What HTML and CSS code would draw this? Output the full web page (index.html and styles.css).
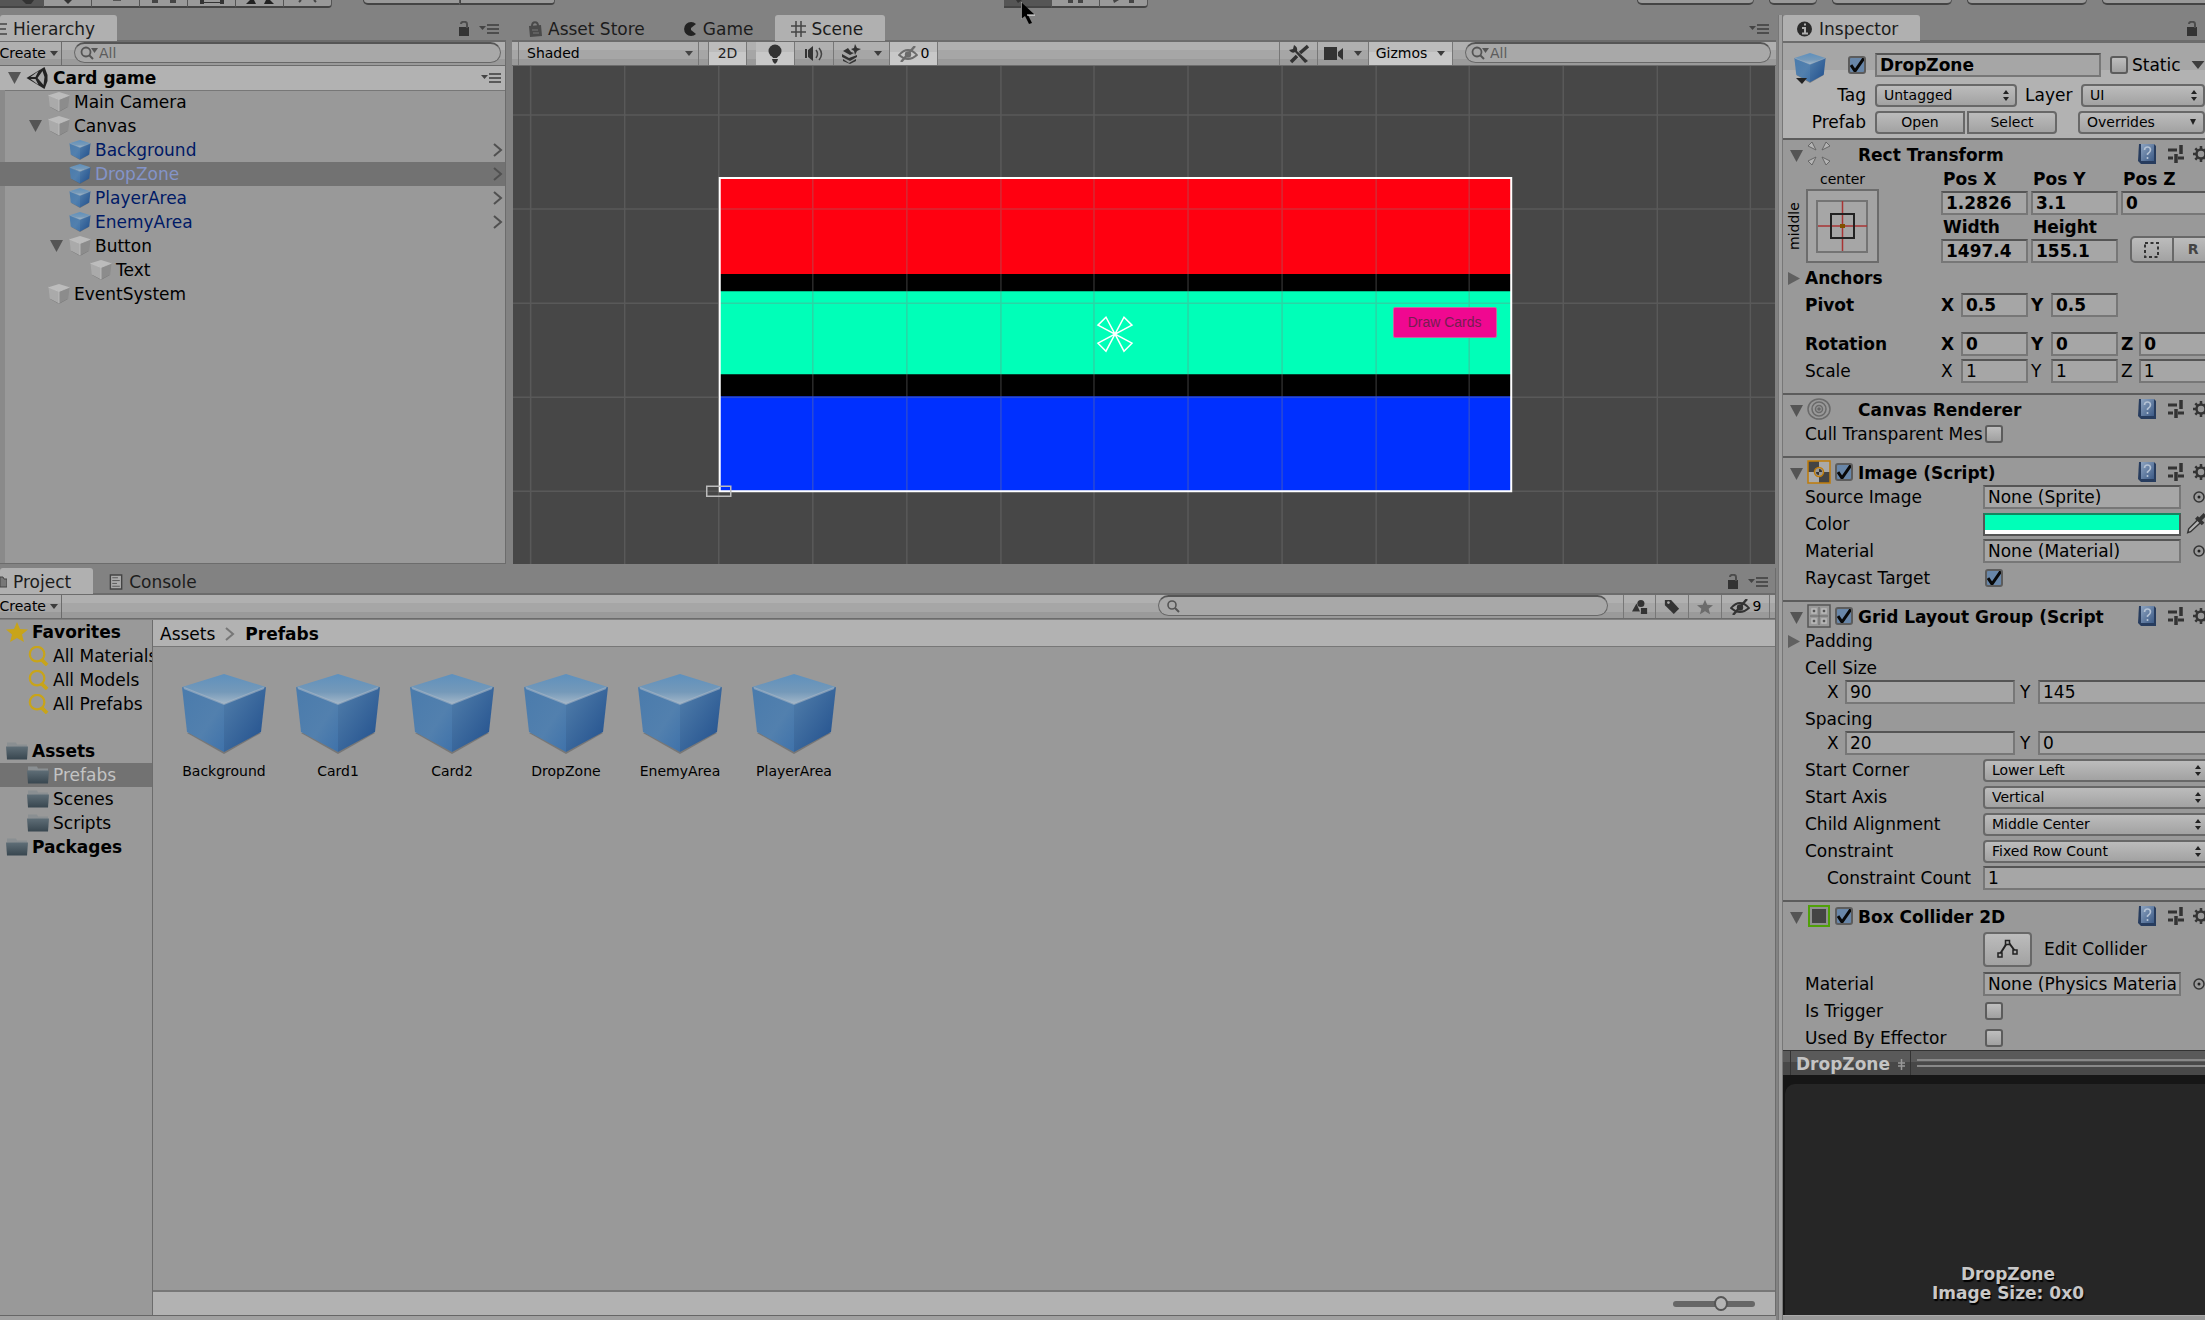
FILE: index.html
```html
<!DOCTYPE html>
<html lang="en">
<head>
<meta charset="utf-8">
<title>Card game - Editor</title>
<link rel="stylesheet" href="styles.css">
</head>
<body>
<svg class="sprite" aria-hidden="true">
  <defs>
    <linearGradient id="bl" x1="0" y1="0" x2="1" y2="1"><stop offset="0" stop-color="#4a7bac"/><stop offset=".6" stop-color="#5280ae"/><stop offset="1" stop-color="#3f72aa"/></linearGradient>
    <linearGradient id="br" x1="0" y1="0" x2="1" y2="1"><stop offset="0" stop-color="#527fab"/><stop offset="1" stop-color="#204e8c"/></linearGradient>
    <linearGradient id="bt" x1="0" y1="0" x2="0" y2="1"><stop offset="0" stop-color="#5e90bd"/><stop offset=".6" stop-color="#7599b9"/><stop offset="1" stop-color="#a3b7c9"/></linearGradient>
    <linearGradient id="fo" x1="0" y1="0" x2="0" y2="1"><stop offset="0" stop-color="#5f6e77"/><stop offset="1" stop-color="#38464f"/></linearGradient>
    <linearGradient id="bk" x1="0" y1="0" x2="1" y2="1"><stop offset="0" stop-color="#8ea4c0"/><stop offset="1" stop-color="#3c5a86"/></linearGradient>
  </defs>
  <symbol id="cube" viewBox="0 0 86 80"><path d="M6 59L43 80l37-21z" fill="#555" opacity=".5"/><path d="M43 0l42 13-42 17L1 13z" fill="url(#bt)"/><path d="M1 13l42 17v48L6 58z" fill="url(#bl)"/><path d="M85 13L43 30v48l37-20z" fill="url(#br)"/><path d="M3 14l40 16 40-16" fill="none" stroke="#a6b8c8" stroke-width="2" opacity=".6"/></symbol>
  <symbol id="gray" viewBox="0 0 86 80"><path d="M6 59L43 80l37-21z" fill="#555" opacity=".5"/><path d="M43 0l42 13-42 17L1 13z" fill="#bcbcbc"/><path d="M1 13l42 17v48L6 58z" fill="#aaa"/><path d="M85 13L43 30v48l37-20z" fill="#8c8c8c"/><path d="M1 13l42 17 42-17M43 30v48" fill="none" stroke="#c4c4c4" stroke-width="3"/></symbol>
  <symbol id="down" viewBox="0 0 13 12"><path d="M0 0h13L6.500 12z" fill="#555"/></symbol>
  <symbol id="right" viewBox="0 0 12 13"><path d="M0 0v13l12-6.500z" fill="#606060"/></symbol>
  <symbol id="chev" viewBox="0 0 10 14"><path d="M1 1l7 6-7 6" fill="none" stroke="#505050" stroke-width="2"/></symbol>
  <symbol id="caret" viewBox="0 0 8 5"><path d="M0 0h8L4 5z" fill="#3c3c3c"/></symbol>
  <symbol id="lock" viewBox="0 0 12 15"><path d="M1 6h10v9H1z" fill="#333"/><path d="M3 3c0-3 6-3 6 0v4" fill="none" stroke="#4c4c4c" stroke-width="2"/></symbol>
  <symbol id="menu" viewBox="0 0 20 10"><path d="M0 2h7L3.500 6z" fill="#444"/><path d="M8 1h12M8 5h12M8 9h12" stroke="#3c3c3c" stroke-width="1.500"/></symbol>
  <symbol id="find" viewBox="0 0 18 14"><circle cx="6" cy="6" r="4.500" fill="none" stroke="#555" stroke-width="1.800"/><path d="M9 9l4 4" stroke="#555" stroke-width="2"/><path d="M11 2h7l-3.500 5z" fill="#555"/></symbol>
  <symbol id="glass" viewBox="0 0 14 14"><circle cx="6" cy="6" r="4" fill="none" stroke="#555" stroke-width="1.600"/><path d="M9 9l4 4" stroke="#555" stroke-width="2"/></symbol>
  <symbol id="gold" viewBox="0 0 22 22"><circle cx="10" cy="9" r="8" fill="none" stroke="#c8a41a" stroke-width="2.500"/><path d="M15 15l6 6" stroke="#c8a41a" stroke-width="4"/></symbol>
  <symbol id="star" viewBox="0 0 22 20"><path d="M11 0l3 7 8 .5-6 5 2 7.500-7-4-7 4 2-7.500-6-5L8 7z"/></symbol>
  <symbol id="folder" viewBox="0 0 22 19"><path d="M1 5V1h9l1 2h10v3z" fill="#8a8f92"/><path d="M0 5h22l-1 13H1z" fill="url(#fo)"/></symbol>
  <symbol id="book" viewBox="0 0 18 21"><path d="M1 1h15l2 2v18H3L0 18z" fill="#273c5e"/><path d="M3 1h13v17H3z" fill="url(#bk)"/><path d="M6.500 7q0-3 3-3t3 3q0 2-3 4v1M9.500 14v2" fill="none" stroke="#b4c2d4" stroke-width="1.600"/></symbol>
  <symbol id="preset" viewBox="0 0 16 18"><path d="M0 5h9M10 13h6M0 13h5" stroke="#333" stroke-width="3"/><path d="M13 0v9M8 9v9" stroke="#333" stroke-width="3.500"/></symbol>
  <symbol id="gear" viewBox="0 0 16 16"><circle cx="8" cy="8" r="4.500" fill="none" stroke="#333" stroke-width="2.500"/><path d="M8 0v3M8 13v3M0 8h3M13 8h3M2.300 2.300l2 2M11.700 11.700l2 2M2.300 13.700l2-2M11.700 4.300l2-2" stroke="#333" stroke-width="2.500"/></symbol>
  <symbol id="pick" viewBox="0 0 12 12"><circle cx="6" cy="6" r="5" fill="none" stroke="#333" stroke-width="1.500"/><circle cx="6" cy="6" r="1.500" fill="#222"/></symbol>
  <symbol id="eye" viewBox="0 0 20 16"><path d="M1 9q9-10 18 0-9 8-18 0z" fill="none" stroke="currentColor" stroke-width="1.800"/><circle cx="10" cy="8.500" r="3.200" fill="currentColor"/><path d="M3 16L17 0" stroke="currentColor" stroke-width="2.400"/></symbol>
</svg>

<div class="editor">
  <header class="topbar">
    <div class="tools">
      <button class="tool on" aria-label="Hand"><svg viewBox="0 0 44 6"><path d="M22 0h12l-3 4h-5z" fill="#333"/></svg></button>
      <button class="tool" aria-label="Move"><svg viewBox="0 0 44 6"><path d="M18 0h8l-4 4z" fill="#333"/></svg></button>
      <button class="tool" aria-label="Rotate"><svg viewBox="0 0 44 6"><path d="M19 0h8v1h-8z" fill="#555"/></svg></button>
      <button class="tool" aria-label="Scale"><svg viewBox="0 0 44 6"><path d="M10 0h6v3h-6zM28 0h6v3h-6z" fill="#444"/></svg></button>
      <button class="tool" aria-label="Rect"><svg viewBox="0 0 44 6"><path d="M10 0h4v2h16V0h4v4h-4V3H14v1h-4z" fill="#333"/></svg></button>
      <button class="tool" aria-label="Transform"><svg viewBox="0 0 44 6"><path d="M8 4l4-4h4l2 4zM36 4l-4-4h-4l-2 4z" fill="#222"/></svg></button>
      <button class="tool" aria-label="Custom"><svg viewBox="0 0 44 6"><path d="M13 2l2-2M28 0l2 2" stroke="#444" stroke-width="2"/></svg></button>
    </div>
    <div class="tools pivots"><button class="tool short wide" aria-label="Pivot"></button><button class="tool short" aria-label="Local"></button></div>
    <div class="space-a"></div>
    <div class="tools play">
      <button class="tool on" aria-label="Play"><svg viewBox="0 0 44 6"><path d="M10 0h6l-4 3z" fill="#333"/></svg></button>
      <button class="tool" aria-label="Pause"><svg viewBox="0 0 44 6"><path d="M14 0h5v3h-5zM24 0h5v3h-5z" fill="#444"/></svg></button>
      <button class="tool" aria-label="Step"><svg viewBox="0 0 44 6"><path d="M11 0h6l-5 3zM27 0h5v3h-5z" fill="#444"/></svg></button>
    </div>
    <div class="space-b"></div>
    <div class="account"><button class="tool short menu-w" aria-label="Collab"></button><button class="tool short cloud" aria-label="Cloud"></button><button class="tool short menu-w" aria-label="Account"></button><button class="tool short menu-w" aria-label="Layers"></button><button class="tool short menu-w" aria-label="Layout"></button></div>
    <svg class="cursor" viewBox="0 0 14 22"><path d="M0 0v17l4-3 4 8 3-1-4-8h7z" fill="#000"/><path d="M0 0v17M6 13h8" stroke="#fff"/></svg>
  </header>

  <div class="work">
    <div class="docks">
      <section class="hierarchy">
        <div class="tabs">
          <div class="tab active cut"><svg class="ic7" viewBox="0 0 7 12"><path d="M0 1h7M0 6h6M0 11h7" stroke="#444" stroke-width="1.500"/></svg>Hierarchy</div>
          <div class="tabtools"><svg class="lock"><use href="#lock"/></svg><svg class="menu"><use href="#menu"/></svg></div>
        </div>
        <div class="bar">
          <button class="create">Create <svg class="caret"><use href="#caret"/></svg></button>
          <label class="search hsearch"><svg class="find"><use href="#find"/></svg><input type="text" placeholder="All" aria-label="Search hierarchy"></label>
        </div>
        <div class="scene-row"><svg class="tri"><use href="#down"/></svg><svg class="logo" viewBox="0 0 21 22"><path d="M0 11L18 0l3 8v6l-3 8z" fill="#222"/><path d="M4 10l8-6-3 6zM4 12h5l3 6zM16 4l2 6-1 8-6-7z" fill="#a8a8a8"/></svg><b>Card game</b><svg class="menu end"><use href="#menu"/></svg></div>
        <ul class="tree">
          <li class="d1"><svg class="cube"><use href="#gray"/></svg>Main Camera</li>
          <li class="d1 open"><svg class="tri"><use href="#down"/></svg><svg class="cube"><use href="#gray"/></svg>Canvas</li>
          <li class="d2 pre"><svg class="cube"><use href="#cube"/></svg>Background<svg class="chev"><use href="#chev"/></svg></li>
          <li class="d2 pre sel"><svg class="cube"><use href="#cube"/></svg>DropZone<svg class="chev"><use href="#chev"/></svg></li>
          <li class="d2 pre"><svg class="cube"><use href="#cube"/></svg>PlayerArea<svg class="chev"><use href="#chev"/></svg></li>
          <li class="d2 pre"><svg class="cube"><use href="#cube"/></svg>EnemyArea<svg class="chev"><use href="#chev"/></svg></li>
          <li class="d2 open"><svg class="tri"><use href="#down"/></svg><svg class="cube"><use href="#gray"/></svg>Button</li>
          <li class="d3"><svg class="cube"><use href="#gray"/></svg>Text</li>
          <li class="d1"><svg class="cube"><use href="#gray"/></svg>EventSystem</li>
        </ul>
      </section>

      <section class="scene">
        <div class="tabs">
          <div class="tab"><svg class="ic15" viewBox="0 0 15 16"><path d="M1 5l12-1 1 11-12 1z" fill="#4a4a4a"/><path d="M4 5c0-5 6-5 6 0" fill="none" stroke="#4a4a4a" stroke-width="2"/><path d="M4 9h6M5 12h6" stroke="#777"/></svg>Asset Store</div>
          <div class="tab"><svg class="ic15" viewBox="0 0 15 16"><path d="M13 3L8 7v2l5 4a7 7 0 1 1 0-10z" fill="#222"/></svg>Game</div>
          <div class="tab active"><svg class="ic15" viewBox="0 0 15 16"><path d="M0 5h15M0 11h15M5 0v16M10 0v16" stroke="#444" stroke-width="1.500"/></svg>Scene</div>
          <div class="tabtools"><svg class="menu"><use href="#menu"/></svg></div>
        </div>
        <div class="bar">
          <select class="shaded" aria-label="Draw mode"><option>Shaded</option></select>
          <button class="tb lit two">2D</button>
          <button class="tb lit" aria-label="Lighting"><svg class="ic20" viewBox="0 0 20 20"><circle cx="10" cy="7" r="6.500" fill="#333"/><path d="M6 10h8l-2 4H8zM7 15h6l-1 3-2 2-2-2z" fill="#333"/></svg></button>
          <button class="tb" aria-label="Audio"><svg class="ic20" viewBox="0 0 20 20"><path d="M1 5h2v9H1zM4 6l5-4v15l-5-4z" fill="#333"/><path d="M12 6q3 4 0 8M15 4q5 6 0 12" fill="none" stroke="#444" stroke-width="1.500"/></svg></button>
          <button class="tb fx" aria-label="Effects"><svg class="ic20" viewBox="0 0 20 20"><path d="M1 10l7 4 8-3v2l-7 4-8-4zM2 15l6 4 7-4v2l-6 3-7-3zM2 7l5-3 3 4 3 1-4 2z" fill="#333"/><path d="M14 0l2 4 4 1-4 2-2 4-1-4-3-2 3-1z" fill="#333"/></svg><svg class="caret"><use href="#caret"/></svg></button>
          <button class="tb lit vis"><svg class="eye dim"><use href="#eye"/></svg>0</button>
          <span class="grow"></span>
          <button class="tb" aria-label="Tools"><svg class="ic20" viewBox="0 0 20 20"><path d="M5 1l-1 4-4 1q3 4 6 2l10 11 3-2L8 7q1-4-3-6z" fill="#333"/><path d="M19 2l-8 7M8 12l-6 6" stroke="#333" stroke-width="3.500"/></svg></button>
          <button class="tb cam" aria-label="Camera"><svg class="ic20" viewBox="0 0 20 20"><path d="M0 3h13v13H0zM14 8l5-4v12l-5-4z" fill="#333"/></svg><svg class="caret"><use href="#caret"/></svg></button>
          <button class="tb lit giz">Gizmos <svg class="caret"><use href="#caret"/></svg></button>
          <label class="search ssearch"><svg class="find"><use href="#find"/></svg><input type="text" placeholder="All" aria-label="Search scene"></label>
        </div>
        <div class="view">
          <svg class="world" viewBox="0 0 1262 498" preserveAspectRatio="xMidYMid slice">
            <path d="M207 112h791v313H207z" fill="#000"/>
            <path d="M207 112h791v96H207z" fill="#ff0010"/>
            <path d="M207 225h791v83H207z" fill="#00ffb8"/>
            <path d="M207 330h791v95H207z" fill="#0030ff"/>
            <path d="M18 0v498M112 0v498M206 0v498M300 0v498M394 0v498M488 0v498M581 0v498M675 0v498M769 0v498M863 0v498M956 0v498M1050 0v498M1144 0v498M1237 0v498M0 49h1262M0 143h1262M0 237h1262M0 331h1262M0 425h1262" stroke="#808080" stroke-opacity=".33" stroke-width="1.500"/>
            <path d="M207 112h791v313H207z" fill="none" stroke="#fff" stroke-width="2"/>
            <path d="M194 420h24v10h-24z" fill="none" stroke="#bbb" stroke-width="1.500"/>
            <path d="M602 268l-9-17-8 8zM602 268l9-17 8 8zM602 268l-9 17-8-8zM602 268l9 17 8-8z" fill="none" stroke="#fff" stroke-width="1.500"/>
          </svg>
          <button class="draw">Draw Cards</button>
        </div>
      </section>

      <section class="project">
        <div class="tabs">
          <div class="tab active cut"><svg class="ic7" viewBox="0 0 7 12"><path d="M0 1h3l1 2h3v8H0z" fill="#777" stroke="#444"/></svg>Project</div>
          <div class="tab"><svg class="ic15" viewBox="0 0 15 17"><path d="M1 1h12v15H1z" fill="#aaa" stroke="#444" stroke-width="1.500"/><path d="M3 4h6M3 7h8M3 10h5M3 13h8" stroke="#555"/></svg>Console</div>
          <div class="tabtools"><svg class="lock"><use href="#lock"/></svg><svg class="menu"><use href="#menu"/></svg></div>
        </div>
        <div class="bar">
          <button class="create">Create <svg class="caret"><use href="#caret"/></svg></button>
          <span class="grow"></span>
          <label class="search psearch"><svg class="find"><use href="#glass"/></svg><input type="text" aria-label="Search project"></label>
          <button class="tb sm" aria-label="By type"><svg class="ic18" viewBox="0 0 18 18"><circle cx="10" cy="5" r="4" fill="#333"/><path d="M0 14l5-9 4 9zM10 10h7v7h-7z" fill="#333"/></svg></button>
          <button class="tb sm" aria-label="By label"><svg class="ic18" viewBox="0 0 18 18"><path d="M1 1h7l9 10-6 6L1 7z" fill="#333"/><circle cx="5" cy="4" r="1.500" fill="#aaa"/></svg></button>
          <button class="tb sm" aria-label="Favorite"><svg class="ic18 dimstar"><use href="#star"/></svg></button>
          <button class="tb nine"><svg class="eye"><use href="#eye"/></svg>9</button>
        </div>
        <div class="browser">
          <ul class="folders">
            <li class="f0"><svg class="fic gold"><use href="#star"/></svg><b>Favorites</b></li>
            <li class="f1"><svg class="fic"><use href="#gold"/></svg>All Materials</li>
            <li class="f1"><svg class="fic"><use href="#gold"/></svg>All Models</li>
            <li class="f1"><svg class="fic"><use href="#gold"/></svg>All Prefabs</li>
            <li class="f0 group"><svg class="fic"><use href="#folder"/></svg><b>Assets</b></li>
            <li class="f1 sel"><svg class="fic"><use href="#folder"/></svg>Prefabs</li>
            <li class="f1"><svg class="fic"><use href="#folder"/></svg>Scenes</li>
            <li class="f1"><svg class="fic"><use href="#folder"/></svg>Scripts</li>
            <li class="f0"><svg class="fic"><use href="#folder"/></svg><b>Packages</b></li>
          </ul>
          <div class="content">
            <nav class="crumbs"><a href="#assets">Assets</a><svg class="chev"><use href="#chev"/></svg><b>Prefabs</b></nav>
            <div class="assets">
              <figure><svg><use href="#cube"/></svg><figcaption>Background</figcaption></figure>
              <figure><svg><use href="#cube"/></svg><figcaption>Card1</figcaption></figure>
              <figure><svg><use href="#cube"/></svg><figcaption>Card2</figcaption></figure>
              <figure><svg><use href="#cube"/></svg><figcaption>DropZone</figcaption></figure>
              <figure><svg><use href="#cube"/></svg><figcaption>EnemyArea</figcaption></figure>
              <figure><svg><use href="#cube"/></svg><figcaption>PlayerArea</figcaption></figure>
            </div>
            <div class="status"><input type="range" min="0" max="100" value="60" aria-label="Icon size"></div>
          </div>
        </div>
      </section>
    </div>

    <aside class="inspector">
      <div class="tabs">
        <div class="tab active"><svg class="ic15" viewBox="0 0 15 16"><circle cx="7.500" cy="8" r="7.500" fill="#2a2a2a"/><path d="M5 7h3v5M5 12.500h6M7 3.500h2" fill="none" stroke="#b0b0b0" stroke-width="2"/></svg>Inspector</div>
        <div class="tabtools"><svg class="lock"><use href="#lock"/></svg></div>
      </div>
      <div class="object">
        <svg class="objcube" viewBox="0 0 32 32"><use href="#cube" width="32" height="30"/><path d="M2 25h11l-5 6z" fill="#222"/></svg>
        <div class="orows">
          <div class="orow">
            <input type="checkbox" id="active" checked aria-label="Active"><input class="name" type="text" value="DropZone" aria-label="Name"><input type="checkbox" id="static"><label for="static">Static</label><svg class="big"><use href="#caret"/></svg>
          </div>
          <div class="orow"><label class="ol" for="tag">Tag</label><select id="tag" class="pop tag"><option>Untagged</option></select><label class="ll" for="layer">Layer</label><select id="layer" class="pop layer"><option>UI</option></select></div>
          <div class="orow"><span class="ol">Prefab</span><span class="pair"><button class="btn">Open</button><button class="btn">Select</button></span><select class="pop over" aria-label="Overrides"><option>Overrides</option></select></div>
        </div>
      </div>

      <div class="comp">
        <div class="title"><svg class="tri"><use href="#down"/></svg><svg class="ci" viewBox="0 0 24 24"><path d="M1 4l4-4 4 8zM23 4l-4-4-4 8zM1 19l4 4 4-8zM23 19l-4 4-4-8z" fill="#b4b4b4" stroke="#666"/></svg><span class="slot"></span><h2>Rect Transform</h2><svg class="bk"><use href="#book"/></svg><svg class="ps"><use href="#preset"/></svg><svg class="gr"><use href="#gear"/></svg></div>
        <div class="rect">
          <div class="anchor"><span class="ac">center</span><span class="am">middle</span>
            <svg class="abox" viewBox="0 0 73 74"><path d="M1 1h71v72H1z" fill="#a4a4a4" stroke="#6c6c6c" stroke-width="2"/><path d="M11 12h50v51H11z" fill="#a6a6a6" stroke="#747474" stroke-width="2"/><path d="M12 37h49M36.500 12v50" stroke="#a83434" stroke-width="1.500"/><path d="M25 25h23v24H25z" fill="none" stroke="#222" stroke-width="2"/><path d="M34 35h5v4h-5z" fill="#805000"/></svg></div>
          <label for="px">Pos X</label><label for="py">Pos Y</label><label for="pz">Pos Z</label>
          <input type="text" id="px" value="1.2826"><input type="text" id="py" value="3.1"><input type="text" id="pz" value="0" class="bleed">
          <label for="w">Width</label><label for="h">Height</label><span></span>
          <input type="text" id="w" value="1497.4"><input type="text" id="h" value="155.1">
          <span class="modes"><button class="btn" aria-label="Blueprint"><svg class="ic15" viewBox="0 0 15 16"><path d="M1 1h13v14H1z" fill="none" stroke="#333" stroke-width="2" stroke-dasharray="3 2.500"/></svg></button><button class="btn raw">R</button></span>
        </div>
        <div class="row fold"><svg class="tr"><use href="#right"/></svg><b>Anchors</b></div>
        <div class="row vec bold"><span>Pivot</span><label>X<input type="text" value="0.5"></label><label>Y<input type="text" value="0.5"></label></div>
        <div class="row vec bold apart"><span>Rotation</span><label>X<input type="text" value="0"></label><label>Y<input type="text" value="0"></label><label class="bleed">Z<input type="text" value="0"></label></div>
        <div class="row vec"><span>Scale</span><label>X<input type="text" value="1"></label><label>Y<input type="text" value="1"></label><label class="bleed">Z<input type="text" value="1"></label></div>
      </div>

      <div class="comp">
        <div class="title"><svg class="tri"><use href="#down"/></svg><svg class="ci" viewBox="0 0 24 24"><g fill="none" stroke="#6a6a6a" stroke-width="1.500"><ellipse cx="12" cy="12" rx="11" ry="10"/><circle cx="12" cy="12" r="7"/><circle cx="12" cy="12" r="3.500"/></g><circle cx="12" cy="12" r="1.800" fill="#666"/></svg><span class="slot"></span><h2>Canvas Renderer</h2><svg class="bk"><use href="#book"/></svg><svg class="ps"><use href="#preset"/></svg><svg class="gr"><use href="#gear"/></svg></div>
        <div class="row"><label for="cull">Cull Transparent Mes</label><input type="checkbox" id="cull"></div>
      </div>

      <div class="comp">
        <div class="title"><svg class="tri"><use href="#down"/></svg><svg class="ci" viewBox="0 0 24 24"><path d="M1 1h22v22H1z" fill="#aaa"/><path d="M1 1h11v11H1zM12 12h11v11H12z" fill="#444"/><path d="M1 1h22v22H1z" fill="none" stroke="#c07c08" stroke-width="1.500"/><circle cx="12" cy="12" r="4.500" fill="#999" stroke="#c07c08" stroke-width="1.500"/><path d="M12 9v3H9a3 3 0 0 0 3 3v-3h3a3 3 0 0 0-3-3" fill="#333"/></svg><input type="checkbox" checked aria-label="Enable Image"><h2>Image (Script)</h2><svg class="bk"><use href="#book"/></svg><svg class="ps"><use href="#preset"/></svg><svg class="gr"><use href="#gear"/></svg></div>
        <div class="row"><label for="src">Source Image</label><input type="text" id="src" value="None (Sprite)"><svg class="pick"><use href="#pick"/></svg></div>
        <div class="row"><span>Color</span><button class="color" aria-label="Color"></button><svg class="drop" viewBox="0 0 24 24"><path d="M6 21l1-4L17 7l3 3L9 20z" fill="#b4b4b4" stroke="#333" stroke-width="1.500"/><path d="M15 5l7 7M18 8l6-6" stroke="#333" stroke-width="4"/></svg></div>
        <div class="row"><label for="mat">Material</label><input type="text" id="mat" value="None (Material)"><svg class="pick"><use href="#pick"/></svg></div>
        <div class="row"><label for="ray">Raycast Target</label><input type="checkbox" id="ray" checked></div>
      </div>

      <div class="comp">
        <div class="title"><svg class="tri"><use href="#down"/></svg><svg class="ci" viewBox="0 0 24 24"><path d="M1 1h22v22H1z" fill="#999" stroke="#555" stroke-width="1.500"/><path d="M5 5h4v4H5zM15 5h4v4h-4zM5 15h4v4H5zM15 15h4v4h-4z" fill="#555" stroke="#bbb" stroke-width="1.500"/><path d="M12 3v18M3 12h18" stroke="#666"/></svg><input type="checkbox" checked aria-label="Enable Grid Layout Group"><h2>Grid Layout Group (Script</h2><svg class="bk"><use href="#book"/></svg><svg class="ps"><use href="#preset"/></svg><svg class="gr"><use href="#gear"/></svg></div>
        <div class="row fold"><svg class="tr"><use href="#right"/></svg>Padding</div>
        <div class="row">Cell Size</div>
        <div class="row xy"><label for="cx">X</label><input type="text" id="cx" value="90"><label for="cy">Y</label><input type="text" id="cy" class="bleed" value="145"></div>
        <div class="row">Spacing</div>
        <div class="row xy"><label for="sx">X</label><input type="text" id="sx" value="20"><label for="sy">Y</label><input type="text" id="sy" class="bleed" value="0"></div>
        <div class="row"><label for="corner">Start Corner</label><select id="corner" class="pop bleed"><option>Lower Left</option></select></div>
        <div class="row"><label for="axis">Start Axis</label><select id="axis" class="pop bleed"><option>Vertical</option></select></div>
        <div class="row"><label for="align">Child Alignment</label><select id="align" class="pop bleed"><option>Middle Center</option></select></div>
        <div class="row"><label for="cons">Constraint</label><select id="cons" class="pop bleed"><option>Fixed Row Count</option></select></div>
        <div class="row"><label for="count" class="indent">Constraint Count</label><input type="text" id="count" class="bleed" value="1"></div>
      </div>

      <div class="comp last">
        <div class="title"><svg class="tri"><use href="#down"/></svg><svg class="ci" viewBox="0 0 24 24"><path d="M2 2h20v20H2z" fill="#444" stroke="#50a008" stroke-width="2"/><path d="M4 4h16v16H4z" fill="none" stroke="#909090" stroke-width="2"/></svg><input type="checkbox" checked aria-label="Enable Box Collider 2D"><h2>Box Collider 2D</h2><svg class="bk"><use href="#book"/></svg><svg class="ps"><use href="#preset"/></svg><svg class="gr"><use href="#gear"/></svg></div>
        <div class="row edit"><span></span><button class="btn editbtn" id="edit" aria-label="Edit Collider"><svg viewBox="0 0 22 20"><path d="M3 15l7-11h2l6 8" fill="none" stroke="#222" stroke-width="2"/><path d="M1 14h4v4H1zM8.500 1.500h4v4h-4zM16 11h4v4h-4z" fill="#aaa" stroke="#222" stroke-width="1.500"/></svg></button><label for="edit">Edit Collider</label></div>
        <div class="row"><label for="pm">Material</label><input type="text" id="pm" value="None (Physics Materia"><svg class="pick"><use href="#pick"/></svg></div>
        <div class="row"><label for="trig">Is Trigger</label><input type="checkbox" id="trig"></div>
        <div class="row"><label for="eff">Used By Effector</label><input type="checkbox" id="eff"></div>
      </div>

      <div class="preview">
        <div class="pbar"><button class="pname">DropZone <svg viewBox="0 0 7 11"><path d="M0 4h7M0 7h7M3.500 0v11" stroke="#999" stroke-width="1.500"/></svg></button><span class="grip"></span></div>
        <div class="pview"><b>DropZone<br>Image Size: 0x0</b></div>
      </div>
    </aside>
  </div>
</div>
</body>
</html>
```
FILE: styles.css
```css
* { box-sizing: border-box; }
body { margin: 0; background: #828282; color: #000; font: 17px/24px "DejaVu Sans", Verdana, sans-serif; }
button, input, select { font: inherit; color: inherit; margin: 0; border-radius: 0; appearance: none; outline: 0; }
ul { list-style: none; margin: 0; padding: 0; }
svg { display: block; flex: none; }
.sprite { position: absolute; width: 0; height: 0; }
.grow { flex: 1; }

.editor { display: flex; flex-direction: column; height: 100vh; overflow: hidden; }
.work { flex: 1; min-height: 0; display: grid; grid-template-columns: minmax(0, 1fr) 423px; gap: 6px; }
.docks { min-height: 0; display: grid; grid-template-columns: 506px minmax(0, 1fr); grid-template-rows: 551fr 749fr; gap: 4px 6px; margin-bottom: 4px; box-shadow: 0 4px #a0a0a0; border-bottom: 1px solid #666; }

/* top toolbar */
.topbar { position: relative; display: flex; align-items: flex-start; height: 15px; flex: none; }
.tools { display: flex; }
.tool { width: 48px; height: 8px; padding: 0; border: 0; border-right: 1px solid #555; border-bottom: 2px solid #444; background: #999; overflow: hidden; }
.tool svg { height: 6px; margin: auto; }
.tool.on { background: #555; }
.tools .tool:last-child { border-bottom-right-radius: 4px; }
.tools:first-child .tool:first-child { width: 44px; }
.short { height: 5px; border-left: 1px solid #444; border-radius: 0 0 5px 5px; }
.pivots { margin-left: 31px; }
.pivots .tool { width: 95px; border-radius: 0 0 5px 0; }
.pivots .wide { width: 97px; border-radius: 0 0 0 5px; }
.space-a { flex: 451; }
.space-b { flex: 491; }
.account { display: flex; gap: 15px; }
.menu-w { width: 120px; }
.account .menu-w:first-child { width: 117px; }
.account .menu-w:last-child { width: 103px; border-right: 0; border-radius: 0 0 0 5px; }
.cursor { position: absolute; left: 1021px; top: 2px; width: 14px; height: 22px; z-index: 2; }

/* tabs */
.tabs { display: flex; height: 27px; flex: none; border-bottom: 2px solid #6c6c6c; color: #1c1c1c; }
.tab { display: flex; align-items: center; gap: 5px; padding: 2px 22px 0 16px; height: 26px; line-height: 22px; }
.tab.active { background: #b0b0b0; border-radius: 3px 3px 0 0; }
.tab.cut { padding-left: 0; gap: 6px; }
.tabtools { margin-left: auto; display: flex; align-items: center; gap: 9px; padding: 2px 7px 0 0; }
.ic7 { width: 7px; height: 12px; }
.ic15 { width: 15px; height: 16px; }
.ic18 { width: 16px; height: 16px; }
.ic20 { width: 20px; height: 20px; }
.lock { width: 12px; height: 15px; }
.menu { width: 20px; height: 10px; }
.caret { width: 8px; height: 5px; }

/* panel toolbars */
.bar { display: flex; height: 24px; flex: none; border-bottom: 1px solid #6c6c6c; background: linear-gradient(#b0b0b0 35%, #a6a6a6 35%, #a6a6a6 75%, #9a9a9a 75%); font-size: 14px; line-height: 23px; }
.create { display: flex; align-items: center; gap: 4px; width: 62px; padding: 0 3px 0 0; border: 0; border-right: 1px solid #6c6c6c; background: none; justify-content: flex-end; white-space: nowrap; }
.search { display: flex; align-items: center; height: 21px; border: 1px solid #686868; border-top: 2px solid #555; border-radius: 11px; background: #a8a8a8; padding-left: 5px; }
.search input { flex: 1; min-width: 0; padding: 0 1px; border: 0; background: none; height: 18px; font-size: 14px; }
.search input::placeholder { color: #5c5c5c; opacity: 1; }
.find { width: 18px; height: 14px; }
.hsearch { flex: 1; margin: 0 4px 0 12px; }
.ssearch { width: 306px; margin: 0 5px 0 12px; }
.psearch { width: 450px; margin-right: 15px; }
.tb { display: flex; align-items: center; justify-content: center; gap: 6px; width: 39px; padding: 0; border: 0; border-right: 1px solid #777; background: none; }
.lit { background: linear-gradient(#bcbcbc 45%, #c8c8c8 45%); }
.two { margin: 0 9px; color: #222; border-left: 1px solid #777; }
.fx { width: 56px; gap: 13px; }
.vis { width: 48px; gap: 3px; }
.cam { width: 51px; gap: 10px; border-left: 0; }
.grow + .tb { border-left: 1px solid #777; }
.giz { width: 84px; gap: 10px; }
.sm { width: 33px; }
.psearch + .sm { border-left: 1px solid #777; }
.nine { width: 48px; gap: 3px; margin-right: 5px; }
.eye { width: 20px; height: 16px; color: #333; }
.dim { color: #6c6c6c; }
.dimstar { fill: #6c6c6c; }
.shaded { width: 181px; margin-left: 6px; padding: 0 8px; border: 0; border-left: 1px solid #777; border-right: 1px solid #777; background: url("data:image/svg+xml,%3Csvg xmlns='http://www.w3.org/2000/svg' width='8' height='5'%3E%3Cpath d='M0 0h8L4 5z' fill='%23444'/%3E%3C/svg%3E") no-repeat right 5px top 9px; }

/* hierarchy */
.hierarchy { display: flex; flex-direction: column; min-height: 0; background: #999; border-right: 1px solid #6c6c6c; border-bottom: 1px solid #6c6c6c; }
.hierarchy .tabs, .scene .tabs, .project .tabs, .inspector > .tabs { background: #828282; }
.hierarchy .tabs { margin-right: -1px; }
.scene-row { display: flex; align-items: center; height: 25px; margin-bottom: -1px; background: #b2b2b2; border-bottom: 1px solid #777; padding: 0 4px 0 8px; gap: 5px; }
.tri { width: 13px; height: 12px; }
.logo { width: 22px; height: 22px; }
.end { margin-left: auto; }
.tree { flex: 1; border-left: 5px solid #8a8a8a; }
.tree li { display: flex; align-items: center; height: 24px; gap: 4px; padding-right: 2px; }
.cube { width: 22px; height: 20px; }
.tree .d1 { padding-left: 43px; }
.tree .d2 { padding-left: 64px; }
.tree .d3 { padding-left: 85px; }
.tree .d1.open { padding-left: 24px; }
.tree .d2.open { padding-left: 45px; }
.tree .tri { margin-right: 2px; }
.pre { color: #001a66; }
.chev { width: 10px; height: 14px; }
.tree .chev { margin-left: auto; }
.tree .sel { background: #727272; color: #8494c8; margin-left: -5px; padding-left: 69px; }

/* scene */
.scene { display: flex; flex-direction: column; min-width: 0; min-height: 0; }
.view { position: relative; flex: 1; min-height: 0; background: #474747; margin: 0 1px; }
.world { width: 100%; height: 100%; }
.draw { position: absolute; left: 69.700%; top: 48.300%; width: 104px; height: 31px; padding: 0; border: 1px solid #c06aa0; border-radius: 2px; background: #f00890; color: #761e50; font: 14px "Liberation Sans", Arial, sans-serif; }

/* project */
.project { grid-column: 1 / -1; display: flex; flex-direction: column; min-height: 0; border-right: 1px solid #6c6c6c; }
.browser { flex: 1; min-height: 0; display: grid; grid-template-columns: 153px minmax(0, 1fr); background: #999; border-top: 1px solid #808080; }
.folders { border-right: 1px solid #6c6c6c; overflow: hidden; white-space: nowrap; }
.folders li { display: flex; align-items: center; gap: 4px; height: 24px; }
.folders .f0 { padding-left: 6px; }
.folders .f1 { padding-left: 27px; }
.folders .group { margin-top: 23px; }
.folders .sel { background: #727272; color: #c4c4c4; }
.fic { width: 22px; height: 20px; }
.gold { fill: #c8a41a; }
.content { display: flex; flex-direction: column; min-height: 0; }
.crumbs { display: flex; align-items: center; gap: 10px; height: 27px; padding: 2px 7px 0; background: #b2b2b2; border-bottom: 1px solid #777; }
.crumbs a { color: inherit; text-decoration: none; }
.crumbs .chev { opacity: .6; }
.assets { flex: 1; display: flex; flex-wrap: wrap; align-content: flex-start; padding: 27px 14px; }
.assets figure { width: 114px; margin: 0; display: flex; flex-direction: column; align-items: center; gap: 5px; }
.assets svg { width: 86px; height: 80px; }
.assets figcaption { font-size: 14px; }
.status { display: flex; align-items: center; justify-content: flex-end; height: 25px; padding-right: 20px; background: #b2b2b2; border-top: 2px solid #777; }
.status input { width: 82px; height: 6px; border-radius: 3px; background: #666; }
.status input::-webkit-slider-thumb { appearance: none; width: 14px; height: 15px; border: 2px solid #555; border-radius: 50%; background: #b4b4b4; }

/* inspector */
.inspector { display: flex; flex-direction: column; min-height: 0; overflow: hidden; background: #999; box-shadow: -3px 0 #a0a0a0, -4px 0 #777; border-left: 1px solid #777; padding-bottom: 4px; }
.inspector > .tabs { border-bottom-width: 3px; height: 28px; }
.inspector .tab { gap: 7px; padding-left: 14px; }
.object { display: flex; padding: 10px 0 4px 11px; background: linear-gradient(#a6a6a6 28%, #b2b2b2 28%); border-bottom: 2px solid #5c5c5c; }
.objcube { width: 32px; height: 32px; }
.orows { flex: 1; min-width: 0; margin-left: -4px; }
.orow { display: flex; align-items: center; height: 24px; margin-bottom: 6px; padding-left: 26px; }
.orow + .orow { margin-bottom: 3px; padding-left: 0; }
.orow:last-child { margin-bottom: 0; }
.orow .name { width: 226px; margin: 0 9px; font-weight: bold; }
.orow label { margin-left: 4px; }
.orow .ol { width: 44px; margin: 0 9px 0 0; text-align: right; display: flex; justify-content: flex-end; }
.orow .ll { margin: 0 8px; width: 48px; }
.big { width: 14px; height: 8px; margin-left: auto; }
.tag { width: 142px; }
.layer { flex: 1; }
.pair { display: flex; width: 182px; gap: 2px; margin-right: 21px; }
.pair .btn { flex: 1; border-radius: 4px 0 0 4px; }
.pair .btn + .btn { border-radius: 0 4px 4px 0; }
.over { flex: 1; }

input[type="text"] { min-width: 0; }
.inspector input[type="text"] { height: 24px; padding: 0 0 0 3px; border: 2px solid #777; border-top-color: #555; background: #a6a6a6; }
input[type="checkbox"] { width: 18px; height: 18px; flex: none; border: 2px solid #5c5c5c; border-radius: 3px; background: linear-gradient(#bebebe, #a0a0a0); }
input[type="checkbox"]:checked { background: url("data:image/svg+xml,%3Csvg xmlns='http://www.w3.org/2000/svg' viewBox='0 0 18 18'%3E%3Cpath d='M3 9l4 6L16 2' fill='none' stroke='%23080808' stroke-width='3'/%3E%3C/svg%3E") center / 18px 18px no-repeat border-box, #6886a8; }
.pop { height: 23px; min-width: 0; padding: 0 7px; border: 2px solid #686868; border-radius: 4px; font-size: 14px; line-height: 19px; background: url("data:image/svg+xml,%3Csvg xmlns='http://www.w3.org/2000/svg' width='6' height='11'%3E%3Cpath d='M0 4h6L3 0zM0 7h6L3 11z' fill='%23222'/%3E%3C/svg%3E") no-repeat right 6px center, linear-gradient(#bcbcbc, #a2a2a2); }
.over { background: url("data:image/svg+xml,%3Csvg xmlns='http://www.w3.org/2000/svg' width='6' height='6'%3E%3Cpath d='M0 0h6L3 6z' fill='%23222'/%3E%3C/svg%3E") no-repeat right 7px center, linear-gradient(#bcbcbc, #a2a2a2); }
.btn { height: 23px; padding: 0; border: 2px solid #686868; border-radius: 4px; font-size: 14px; line-height: 19px; background: linear-gradient(#bcbcbc, #a2a2a2); }
.bleed { margin-right: -4px; }

.comp { flex: none; padding-bottom: 10px; border-bottom: 2px solid #5c5c5c; }
.title { display: flex; align-items: center; height: 27px; padding-left: 7px; gap: 4px; }
.title h2 { flex: 1; min-width: 0; margin: 3px 0 0 1px; font-size: 17px; line-height: 24px; white-space: nowrap; }
.title .tri { margin-top: 4px; }
.ci { width: 24px; height: 24px; }
.slot { width: 18px; }
.bk { width: 18px; height: 21px; margin-right: 8px; }
.ps { width: 16px; height: 18px; margin-right: 5px; }
.gr { width: 16px; height: 16px; margin-right: -4px; }
.row { display: flex; align-items: center; height: 24px; margin-bottom: 3px; padding-left: 22px; white-space: nowrap; }
.row:last-child { margin-bottom: 0; }
.row > label:first-child, .row > span:first-child { width: 178px; flex: none; }
.row > input[type="text"], .row > select, .color { flex: 1; }
.row > input[type="checkbox"] { margin-left: 2px; }
.row > .indent { padding-left: 22px; }
.row.fold { padding-left: 5px; gap: 5px; }
.tr { width: 12px; height: 13px; }
.pick { width: 12px; height: 12px; margin: 0 0 0 12px; }
.color { height: 23px; margin-right: 1px; padding: 0; border: 2px solid #555; border-top-color: #108860; background: linear-gradient(#00ffb8 80%, #fff 80%); }
.drop { width: 23px; height: 24px; }
.row.xy { margin-top: -3px; padding-left: 44px; }
.row.xy label { width: 18px; }
.row.xy label + input { flex: 0 0 170px; margin-right: 5px; }
.row.xy .bleed { flex: 1; margin-right: -4px; }
.row.vec { display: grid; grid-template-columns: 133px 87px 87px 1fr; gap: 3px; }
.vec label { display: flex; min-width: 0; }
.vec input { flex: none; width: 67px; margin-left: auto; }
.vec .bleed input { flex: 1; margin-left: 6px; }
.row.vec label { line-height: 24px; }
.row.vec span:first-child { width: auto; }
.bold, .bold input { font-weight: bold; }
.row.apart { margin-top: 15px; }
.rect { display: grid; grid-template-columns: 155px 87px 87px 1fr; grid-template-rows: repeat(4, 24px); column-gap: 3px; margin-bottom: 3px; font-weight: bold; }
.rect label { padding-left: 2px; }
.anchor { grid-row: 1 / 5; display: grid; grid-template-columns: 23px 73px; grid-template-rows: 22px 74px; font-size: 14px; font-weight: normal; }
.ac { grid-column: 2; text-align: center; }
.am { writing-mode: vertical-rl; transform: rotate(180deg); text-align: center; line-height: 23px; }
.abox { width: 73px; height: 74px; }
.modes { display: flex; margin: -3px -10px 0 9px; }
.modes .btn { flex: 1; height: 27px; border-radius: 5px 0 0 5px; display: grid; place-content: center; color: #444; }
.modes .raw { border-left: 0; border-radius: 0; }
.row.edit { height: 40px; }
.editbtn { width: 49px; height: 35px; margin-right: 12px; display: grid; place-content: center; }
.editbtn svg { width: 22px; height: 20px; }
.comp.last { padding: 0; border: 0; }

.preview { flex: 1; min-height: 0; display: flex; flex-direction: column; background: #161616; border-bottom: 1px solid #aaa; }
.pbar { display: flex; align-items: center; height: 25px; padding-left: 7px; background: linear-gradient(#5a5a5a 45%, #484848 45%); border-top: 1px solid #333; }
.pname { display: flex; align-items: center; height: 24px; gap: 8px; padding: 2px 5px 0; border: 1px solid #333; border-width: 0 1px; background: none; color: #c4c4c4; font-weight: bold; }
.pname svg { width: 7px; height: 11px; }
.grip { flex: 1; height: 8px; margin-left: 6px; border: 1px solid #888; border-width: 2px 0; }
.pview { flex: 1; display: flex; align-items: flex-end; margin: 9px 0 0 2px; padding: 0 0 12px 147px; border-top-left-radius: 10px; background: #262626; color: #c8c8c8; line-height: 19px; text-align: center; text-shadow: 1px 2px 1px #000; }
```
